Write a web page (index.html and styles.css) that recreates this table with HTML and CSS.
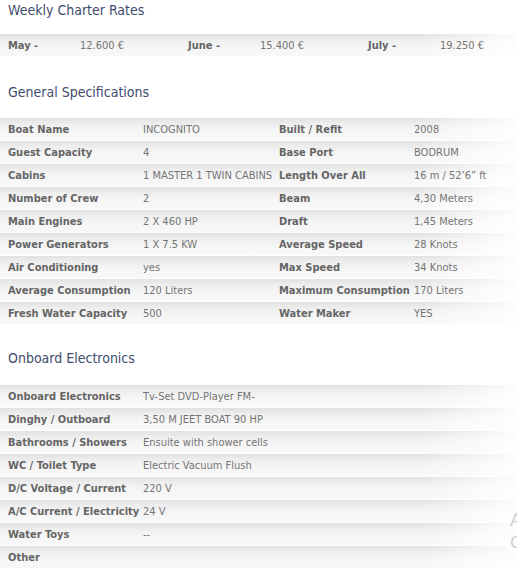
FILE: index.html
```html
<!DOCTYPE html>
<html>
<head>
<meta charset="utf-8">
<link rel="stylesheet" href="styles.css">
</head>
<body>
<div class="page">
  <section class="section first">
    <h2 class="title">Weekly Charter Rates</h2>
    <div class="rates row">
      <span class="lbl">May -</span><span class="val">12.600 €</span>
      <span class="lbl">June -</span><span class="val">15.400 €</span>
      <span class="lbl">July -</span><span class="val">19.250 €</span>
    </div>
  </section>

  <section class="section">
    <h2 class="title">General Specifications</h2>
    <div class="list">
      <div class="row spec"><span class="lbl">Boat Name</span><span class="val">INCOGNITO</span><span class="lbl">Built / Refit</span><span class="val">2008</span></div>
      <div class="row spec"><span class="lbl">Guest Capacity</span><span class="val">4</span><span class="lbl">Base Port</span><span class="val">BODRUM</span></div>
      <div class="row spec"><span class="lbl">Cabins</span><span class="val">1 MASTER 1 TWIN CABINS</span><span class="lbl">Length Over All</span><span class="val">16 m / 52’6” ft</span></div>
      <div class="row spec"><span class="lbl">Number of Crew</span><span class="val">2</span><span class="lbl">Beam</span><span class="val">4,30 Meters</span></div>
      <div class="row spec"><span class="lbl">Main Engines</span><span class="val">2 X 460 HP</span><span class="lbl">Draft</span><span class="val">1,45 Meters</span></div>
      <div class="row spec"><span class="lbl">Power Generators</span><span class="val">1 X 7.5 KW</span><span class="lbl">Average Speed</span><span class="val">28 Knots</span></div>
      <div class="row spec"><span class="lbl">Air Conditioning</span><span class="val">yes</span><span class="lbl">Max Speed</span><span class="val">34 Knots</span></div>
      <div class="row spec"><span class="lbl">Average Consumption</span><span class="val">120 Liters</span><span class="lbl">Maximum Consumption</span><span class="val">170 Liters</span></div>
      <div class="row spec"><span class="lbl">Fresh Water Capacity</span><span class="val">500</span><span class="lbl">Water Maker</span><span class="val">YES</span></div>
    </div>
  </section>

  <section class="section third">
    <h2 class="title">Onboard Electronics</h2>
    <div class="list">
      <div class="row pair"><span class="lbl">Onboard Electronics</span><span class="val">Tv-Set DVD-Player FM-</span></div>
      <div class="row pair"><span class="lbl">Dinghy / Outboard</span><span class="val">3,50 M JEET BOAT 90 HP</span></div>
      <div class="row pair"><span class="lbl">Bathrooms / Showers</span><span class="val">Ensuite with shower cells</span></div>
      <div class="row pair"><span class="lbl">WC / Toilet Type</span><span class="val">Electric Vacuum Flush</span></div>
      <div class="row pair"><span class="lbl">D/C Voltage / Current</span><span class="val">220 V</span></div>
      <div class="row pair"><span class="lbl">A/C Current / Electricity</span><span class="val">24 V</span></div>
      <div class="row pair"><span class="lbl">Water Toys</span><span class="val">--</span></div>
      <div class="row pair"><span class="lbl">Other</span><span class="val"></span></div>
    </div>
  </section>
</div>
<div class="side-peek">
  <span class="peek-line">A</span>
  <span class="peek-line small">C</span>
</div>
</body>
</html>
```

FILE: styles.css
```css
html, body {
  margin: 0;
  padding: 0;
  overflow: hidden;
  background: #ffffff;
}

body {
  font-family: "DejaVu Sans Condensed", "DejaVu Sans", Tahoma, sans-serif;
  font-size: 11px;
  color: #727272;
  position: relative;
  width: 517px;
  height: 571px;
}

.page {
  width: 540px;
}

.section {
  margin-top: 26px;
}

.section.first {
  margin-top: 0;
}

.section.third {
  margin-top: 24px;
}

.title {
  margin: 0 0 15px 0;
  padding-left: 8px;
  font-family: "DejaVu Sans Condensed", "DejaVu Sans", Tahoma, sans-serif;
  font-weight: normal;
  font-size: 14px;
  line-height: 20px;
  height: 20px;
  color: #3d4c6c;
}

.first .title {
  margin-bottom: 14px;
}

.third .title {
  margin-bottom: 16px;
}

.row {
  display: grid;
  align-items: center;
  height: 23px;
  box-sizing: border-box;
  padding-left: 8px;
  white-space: nowrap;
  background:
    linear-gradient(to right, rgba(255,255,255,0) 0%, rgba(255,255,255,0) 78%, rgba(255,255,255,0.9) 96%, #ffffff 100%),
    linear-gradient(to bottom, #e1e1e1 0%, #ededed 25%, #f5f5f5 55%, #f8f8f8 100%);
  border-top: 1px solid #ffffff;
}

.rates {
  grid-template-columns: 72px 108px 72px 108px 72px 108px;
  height: 22px;
  border-top: none;
}

.spec {
  grid-template-columns: 135px 136px 135px 1fr;
}

.pair {
  grid-template-columns: 135px 1fr;
}

.lbl {
  font-weight: bold;
  color: #656565;
}

.val {
  color: #747474;
}

.side-peek {
  position: absolute;
  left: 510px;
  top: 509px;
  display: flex;
  flex-direction: column;
  gap: 2px;
  font-family: "Open Sans", "DejaVu Sans", sans-serif;
  color: #cdcdcd;
}

.peek-line {
  font-size: 19px;
  line-height: 21px;
}

.peek-line.small {
  font-size: 17px;
  line-height: 20px;
}
```
